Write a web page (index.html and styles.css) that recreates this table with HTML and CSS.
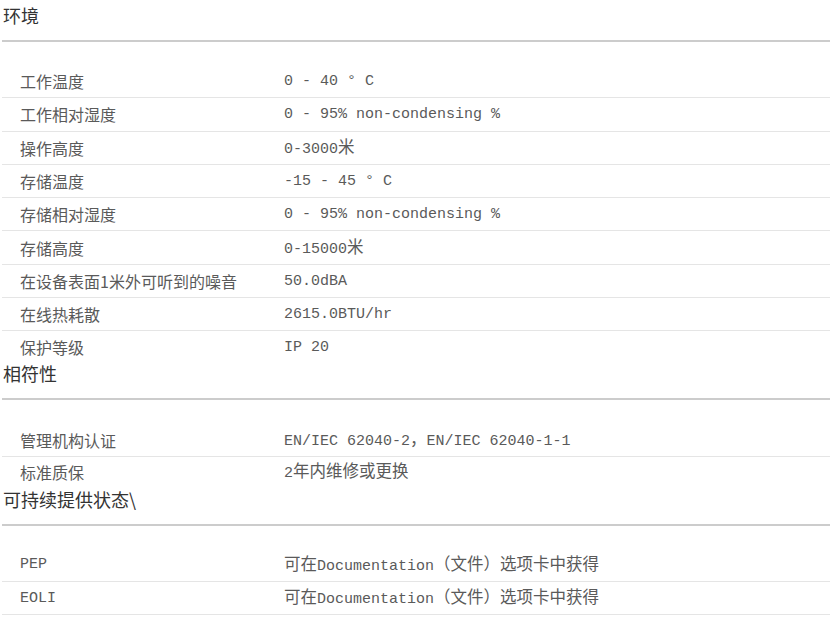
FILE: index.html
```html
<!DOCTYPE html>
<html lang="zh-CN">
<head>
<meta charset="utf-8">
<title>规格</title>
<link rel="stylesheet" href="styles.css">
</head>
<body>
<div class="spec">
  <section class="section">
    <h2 class="section-title">环境</h2>
    <div class="rows">
      <div class="row"><div class="label">工作温度</div><div class="value">0 - 40 ° C</div></div>
      <div class="row"><div class="label">工作相对湿度</div><div class="value">0 - 95% non-condensing %</div></div>
      <div class="row"><div class="label">操作高度</div><div class="value">0-3000<span class="cjk">米</span></div></div>
      <div class="row"><div class="label">存储温度</div><div class="value">-15 - 45 ° C</div></div>
      <div class="row"><div class="label">存储相对湿度</div><div class="value">0 - 95% non-condensing %</div></div>
      <div class="row"><div class="label">存储高度</div><div class="value">0-15000<span class="cjk">米</span></div></div>
      <div class="row"><div class="label">在设备表面1米外可听到的噪音</div><div class="value">50.0dBA</div></div>
      <div class="row"><div class="label">在线热耗散</div><div class="value">2615.0BTU/hr</div></div>
      <div class="row"><div class="label">保护等级</div><div class="value">IP 20</div></div>
    </div>
  </section>
  <section class="section">
    <h2 class="section-title">相符性</h2>
    <div class="rows">
      <div class="row"><div class="label">管理机构认证</div><div class="value">EN/IEC 62040-2<span class="cjk">，</span>EN/IEC 62040-1-1</div></div>
      <div class="row"><div class="label">标准质保</div><div class="value">2<span class="cjk">年内维修或更换</span></div></div>
    </div>
  </section>
  <section class="section">
    <h2 class="section-title">可持续提供状态\</h2>
    <div class="rows">
      <div class="row"><div class="label latin">PEP</div><div class="value"><span class="cjk">可在</span>Documentation<span class="cjk">（文件）选项卡中获得</span></div></div>
      <div class="row"><div class="label latin">EOLI</div><div class="value"><span class="cjk">可在</span>Documentation<span class="cjk">（文件）选项卡中获得</span></div></div>
    </div>
  </section>
</div>
</body>
</html>
```
FILE: styles.css
```css
html, body {
  margin: 0;
  padding: 0;
  background: #ffffff;
}

.spec {
  padding: 4px 3px 0 2px;
}

.section-title {
  margin: 0;
  padding: 0 0 14px 1px;
  font-family: "Noto Sans CJK SC", "Noto Sans", sans-serif;
  font-size: 18px;
  font-weight: 400;
  line-height: 22px;
  color: #333333;
  border-bottom: 2px solid #cccccc;
}

.rows {
  padding-top: 23px;
}

.row {
  display: grid;
  grid-template-columns: 282px 1fr;
  align-items: center;
  height: 33.3px;
  box-sizing: border-box;
  border-bottom: 1px solid #e5e5e5;
}

.section:not(:last-child) .row:last-child {
  height: 31px;
  border-bottom: none;
}

.label {
  padding-left: 18px;
  font-family: "Noto Sans CJK SC", sans-serif;
  font-size: 16px;
  line-height: 20px;
  color: #5a5a5a;
  white-space: nowrap;
}

.label.latin {
  font-family: "Liberation Mono", "Noto Sans CJK SC", monospace;
  font-size: 15px;
  padding-top: 1px;
}

.value {
  padding-top: 2px;
  font-family: "Liberation Mono", "Noto Sans CJK SC", monospace;
  font-size: 15px;
  line-height: 20px;
  color: #5a5a5a;
  white-space: nowrap;
}

.cjk {
  font-family: "Noto Sans CJK SC", sans-serif;
  font-size: 16.5px;
  line-height: 1;
}
```
